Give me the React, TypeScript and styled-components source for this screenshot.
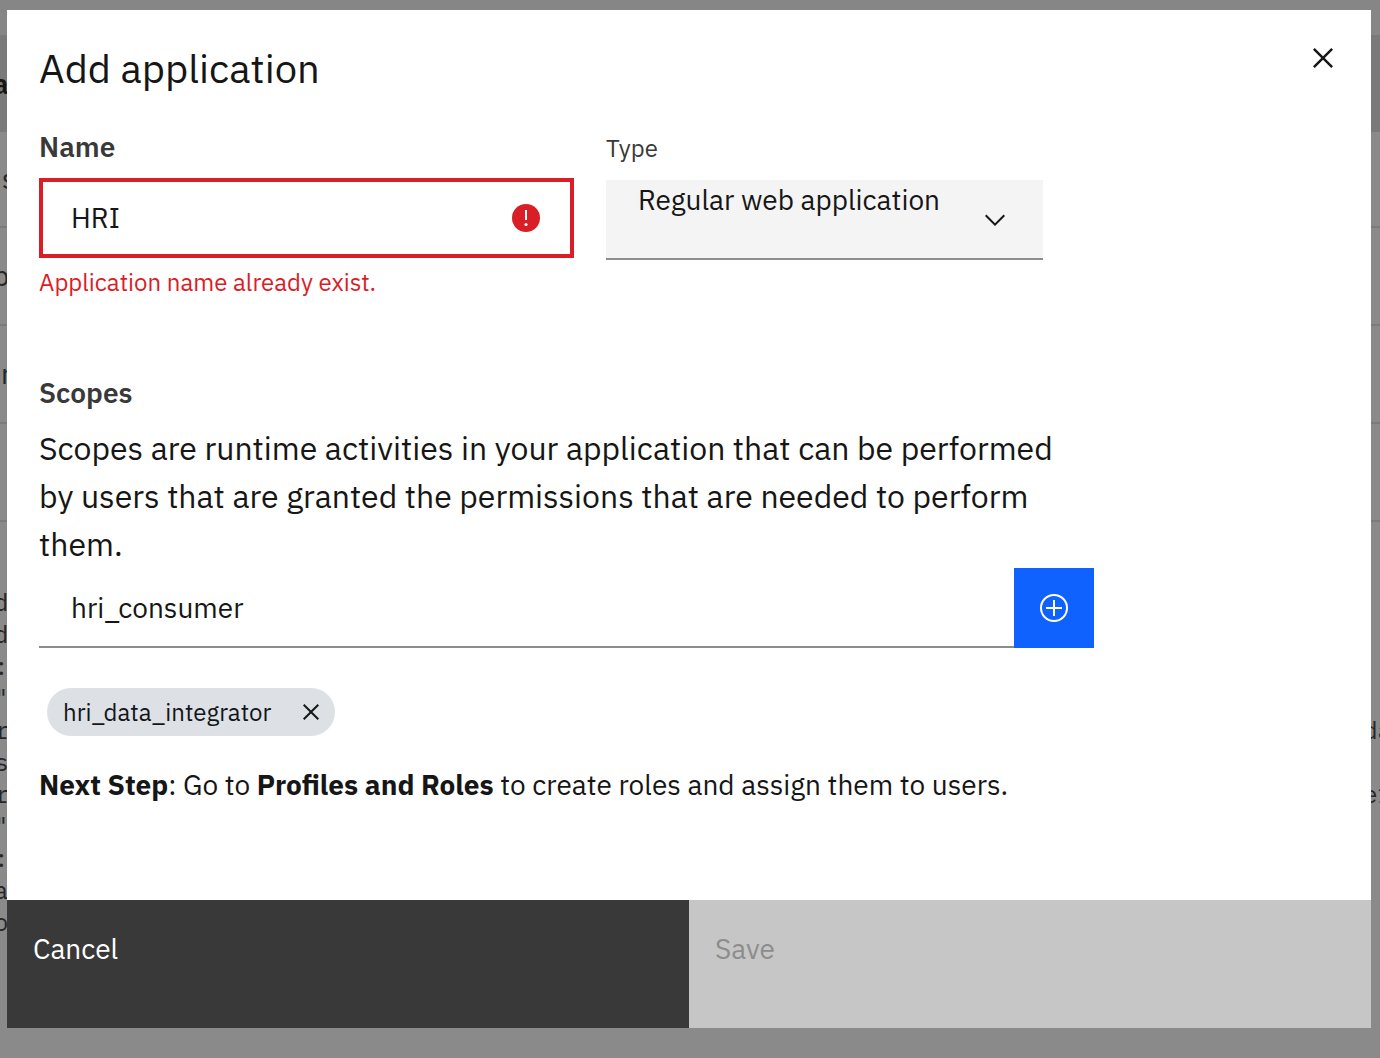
import React, { useState } from 'react';
import styled, { createGlobalStyle } from 'styled-components';

const sans = '"IBM Plex Sans", Roboto, "Liberation Sans", sans-serif';
const mono = '"IBM Plex Mono", "Liberation Mono", monospace';

const GlobalStyle = createGlobalStyle`
  *, *::before, *::after { box-sizing: border-box; }
  body { margin: 0; background: #8a8a8a; color: #161616; font-family: ${sans}; }
  button, input, select { font-family: inherit; border-radius: 0; }
`;

const Page = styled.div`
  display: grid;
  min-height: 100vh;
  overflow: hidden;
  > * { grid-area: 1 / 1; min-width: 0; }
`;

/* The page behind the dialog */
const Backdrop = styled.div`
  padding-top: 35px;
  background: linear-gradient(#868686 0 35px, #8a8a8a 35px);
  color: #262626;
  overflow: hidden;
`;

const BackTable = styled.table`
  width: 100%;
  border-collapse: separate;
  border-spacing: 0;
  table-layout: fixed;
  font-size: 28px;
  line-height: 36px;
  text-align: left;
`;

const BackHead = styled.th`
  height: 97px;
  padding: 0;
  background: #7a7a7a;
  color: #161616;
  font-weight: 600;
  text-indent: -7px;
`;

const BackCell = styled.td<{ $indent: number }>`
  height: 98px;
  padding: 0;
  border-bottom: 2px solid #7b7b7b;
  text-indent: ${(p) => p.$indent}px;

  tr:first-child > & { height: 96px; }
`;

const BackCode = styled.div`
  margin: 64px -12px 0 -6px;
  font-family: ${mono};
  font-size: 24px;
  line-height: 32px;
`;

const CodeLine = styled.div`
  display: flex;
  justify-content: space-between;
  height: 32px;
`;

/* Dialog */
const Stage = styled.div`
  display: flex;
  padding: 10px 9px 30px 7px;
`;

const Dialog = styled.section`
  position: relative;
  display: flex;
  flex: 1;
  flex-direction: column;
  min-width: 0;
  background: #ffffff;
`;

const Header = styled.header`
  display: flex;
  justify-content: space-between;
  padding: 8px 8px 0 32px;
`;

const Title = styled.h1`
  margin: 22px 0 0;
  font-size: 40px;
  font-weight: 400;
  line-height: 56px;
`;

const IconButton = styled.button<{ $size: number }>`
  display: grid;
  flex: none;
  place-items: center;
  width: ${(p) => p.$size}px;
  height: ${(p) => p.$size}px;
  padding: 0;
  border: 0;
  background: transparent;
  color: #161616;
  cursor: pointer;
`;

const Body = styled.div`
  flex: 1;
  width: 100%;
  max-width: 1119px;
  padding: 32px 32px 0;
`;

const Fields = styled.div`
  display: grid;
  grid-template-columns: minmax(0, 535px) minmax(0, 437px);
  gap: 32px;
`;

const Field = styled.div`
  display: flex;
  flex-direction: column;
`;

const Label = styled.label<{ $strong?: boolean }>`
  margin-bottom: 14px;
  color: #393939;
  font-size: ${(p) => (p.$strong ? 28 : 24)}px;
  font-weight: ${(p) => (p.$strong ? 600 : 400)};
  line-height: ${(p) => (p.$strong ? 34 : 36)}px;
`;

const Control = styled.div`
  position: relative;
  flex: 1;
  min-width: 0;
`;

const TextInput = styled.input<{ $invalid?: boolean }>`
  display: block;
  width: 100%;
  height: 80px;
  padding: ${(p) => (p.$invalid ? '0 60px 2px 28px' : '0 32px')};
  border: ${(p) => (p.$invalid ? '4px solid #da1e28' : '0 solid #8d8d8d')};
  border-bottom-width: ${(p) => (p.$invalid ? 4 : 2)}px;
  outline: none;
  background: #ffffff;
  color: #161616;
  font-size: 28px;
`;

const Overlay = styled.span<{ $right: number }>`
  position: absolute;
  top: 24px;
  right: ${(p) => p.$right}px;
  display: flex;
  pointer-events: none;
`;

const ErrorText = styled.p`
  margin: 8px 0 0;
  color: #da1e28;
  font-size: 24px;
  line-height: 32px;
`;

const Select = styled.select`
  display: block;
  width: 100%;
  height: 80px;
  padding: 0 64px 40px 32px;
  border: 0;
  border-bottom: 2px solid #8d8d8d;
  outline: none;
  appearance: none;
  background: #f4f4f4;
  color: #161616;
  font-size: 28px;
`;

const SectionTitle = styled.h2`
  margin: 78px 0 0;
  color: #393939;
  font-size: 28px;
  font-weight: 600;
  line-height: 34px;
`;

const Description = styled.p`
  margin: 14px 0 0;
  font-size: 32px;
  line-height: 48px;
`;

const ScopeForm = styled.div`
  display: flex;
`;

const AddButton = styled(IconButton)`
  background: #0f62fe;
  color: #ffffff;
`;

const Tags = styled.div`
  display: flex;
  flex-wrap: wrap;
  gap: 16px;
  padding: 40px 8px 0;
`;

const Tag = styled.span`
  display: flex;
  align-items: center;
  gap: 16px;
  height: 48px;
  padding-left: 16px;
  border-radius: 24px;
  background: #dde1e6;
  color: #121619;
  font-size: 24px;
  line-height: 32px;
`;

const NextStep = styled.p`
  margin: 32px 0;
  font-size: 28px;
  line-height: 34px;
`;

const Footer = styled.footer`
  display: grid;
  grid-template-columns: 1fr 1fr;
`;

const FooterButton = styled.button`
  display: flex;
  height: 128px;
  padding: 32px 26px;
  border: 0;
  background: #393939;
  color: #ffffff;
  font-size: 28px;
  line-height: 34px;
  text-align: left;
  cursor: pointer;

  &:disabled {
    background: #c6c6c6;
    color: #8d8d8d;
    cursor: not-allowed;
  }
`;

const CloseIcon = ({ size }: { size: number }) => (
  <svg width={size} height={size} viewBox="0 0 32 32" fill="currentColor" aria-hidden="true">
    <path d="M24 9.4L22.6 8 16 14.6 9.4 8 8 9.4 14.6 16 8 22.6 9.4 24 16 17.4 22.6 24 24 22.6 17.4 16z" />
  </svg>
);

const ErrorIcon = () => (
  <svg width="32" height="32" viewBox="0 0 16 16" aria-hidden="true">
    <circle cx="8" cy="8" r="7" fill="#da1e28" />
    <path d="M7.5 4h1v5h-1z" fill="#fff" />
    <circle cx="8" cy="11.25" r="0.8" fill="#fff" />
  </svg>
);

const ChevronIcon = () => (
  <svg width="32" height="32" viewBox="0 0 16 16" fill="#161616" aria-hidden="true">
    <path d="M8 11L3 6l.7-.7L8 9.6l4.3-4.3.7.7z" />
  </svg>
);

const AddIcon = () => (
  <svg width="32" height="32" viewBox="0 0 32 32" fill="none" stroke="currentColor" strokeWidth="2" aria-hidden="true">
    <circle cx="16" cy="16" r="13" />
    <path d="M16 8v16M8 16h16" />
  </svg>
);

const rows = [
  { text: 's', indent: 2 },
  { text: 'p', indent: -7 },
  { text: 'ir', indent: -6 },
  { text: '', indent: 0 },
];

const codeLines = [
  ['d'], ['d'], [':'], ['"'], ['r', 'da'], ['s'], ['r', 'e1'], ['"'], [':'], ['a'], ['o'],
];

export default function App() {
  const [name, setName] = useState('HRI');
  const [scope, setScope] = useState('hri_consumer');
  const [scopes, setScopes] = useState(['hri_data_integrator']);

  const addScope = () => {
    if (scope && !scopes.includes(scope)) {
      setScopes([...scopes, scope]);
      setScope('');
    }
  };

  return (
    <>
      <GlobalStyle />
      <Page>
        <Backdrop aria-hidden="true">
          <BackTable>
            <thead>
              <tr><BackHead>a</BackHead></tr>
            </thead>
            <tbody>
              {rows.map((row, i) => (
                <tr key={i}><BackCell $indent={row.indent}>{row.text}</BackCell></tr>
              ))}
            </tbody>
          </BackTable>
          <BackCode>
            {codeLines.map((line, i) => (
              <CodeLine key={i}>
                {line.map((part) => <span key={part}>{part}</span>)}
              </CodeLine>
            ))}
          </BackCode>
        </Backdrop>

        <Stage>
          <Dialog role="dialog" aria-modal="true" aria-labelledby="dialog-title">
            <Header>
              <Title id="dialog-title">Add application</Title>
              <IconButton $size={80} type="button" aria-label="Close">
                <CloseIcon size={40} />
              </IconButton>
            </Header>

            <Body>
              <Fields>
                <Field>
                  <Label htmlFor="app-name" $strong>Name</Label>
                  <Control>
                    <TextInput
                      id="app-name"
                      value={name}
                      onChange={(e) => setName(e.target.value)}
                      $invalid
                      aria-invalid="true"
                      aria-describedby="app-name-error"
                    />
                    <Overlay $right={32}><ErrorIcon /></Overlay>
                    <ErrorText id="app-name-error">Application name already exist.</ErrorText>
                  </Control>
                </Field>
                <Field>
                  <Label htmlFor="app-type">Type</Label>
                  <Control>
                    <Select id="app-type" defaultValue="web">
                      <option value="web">Regular web application</option>
                    </Select>
                    <Overlay $right={32}><ChevronIcon /></Overlay>
                  </Control>
                </Field>
              </Fields>

              <SectionTitle id="scopes-title">Scopes</SectionTitle>
              <Description>
                Scopes are runtime activities in your application that can be performed by users
                that are granted the permissions that are needed to perform them.
              </Description>
              <ScopeForm>
                <Control>
                  <TextInput
                    aria-labelledby="scopes-title"
                    value={scope}
                    onChange={(e) => setScope(e.target.value)}
                  />
                </Control>
                <AddButton $size={80} type="button" aria-label="Add scope" onClick={addScope}>
                  <AddIcon />
                </AddButton>
              </ScopeForm>
              <Tags>
                {scopes.map((item) => (
                  <Tag key={item}>
                    {item}
                    <IconButton
                      $size={48}
                      type="button"
                      aria-label={`Remove ${item}`}
                      onClick={() => setScopes(scopes.filter((s) => s !== item))}
                    >
                      <CloseIcon size={32} />
                    </IconButton>
                  </Tag>
                ))}
              </Tags>
              <NextStep>
                <strong>Next Step</strong>: Go to <strong>Profiles and Roles</strong> to create roles
                and assign them to users.
              </NextStep>
            </Body>

            <Footer>
              <FooterButton type="button">Cancel</FooterButton>
              <FooterButton type="button" disabled>Save</FooterButton>
            </Footer>
          </Dialog>
        </Stage>
      </Page>
    </>
  );
}
